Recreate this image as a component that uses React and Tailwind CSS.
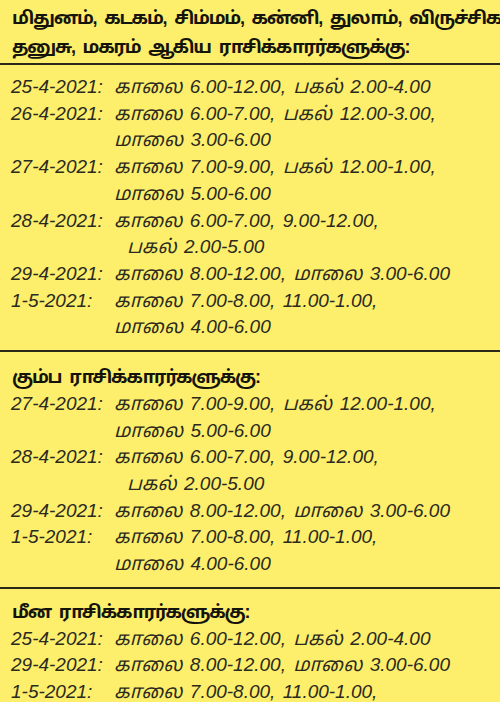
import React from "react";

function Row({ date, time, indent }) {
  return (
    <div className="flex h-[26.7px] items-center whitespace-nowrap">
      <div className="w-[103px] shrink-0">{date}</div>
      <div className={indent ? "pl-[13px]" : ""}>{time}</div>
    </div>
  );
}

function Rule({ className }) {
  return <div className={`h-[2px] bg-[#2a2818] ${className}`}></div>;
}

export default function App() {
  const first = [
    { date: "25-4-2021:", time: "காலை 6.00-12.00, பகல் 2.00-4.00" },
    { date: "26-4-2021:", time: "காலை 6.00-7.00, பகல் 12.00-3.00," },
    { date: "", time: "மாலை 3.00-6.00" },
    { date: "27-4-2021:", time: "காலை 7.00-9.00, பகல் 12.00-1.00," },
    { date: "", time: "மாலை 5.00-6.00" },
    { date: "28-4-2021:", time: "காலை 6.00-7.00, 9.00-12.00," },
    { date: "", time: "பகல் 2.00-5.00", indent: true },
    { date: "29-4-2021:", time: "காலை 8.00-12.00, மாலை 3.00-6.00" },
    { date: "1-5-2021:", time: "காலை 7.00-8.00, 11.00-1.00," },
    { date: "", time: "மாலை 4.00-6.00" },
  ];
  const second = [
    { date: "27-4-2021:", time: "காலை 7.00-9.00, பகல் 12.00-1.00," },
    { date: "", time: "மாலை 5.00-6.00" },
    { date: "28-4-2021:", time: "காலை 6.00-7.00, 9.00-12.00," },
    { date: "", time: "பகல் 2.00-5.00", indent: true },
    { date: "29-4-2021:", time: "காலை 8.00-12.00, மாலை 3.00-6.00" },
    { date: "1-5-2021:", time: "காலை 7.00-8.00, 11.00-1.00," },
    { date: "", time: "மாலை 4.00-6.00" },
  ];
  const third = [
    { date: "25-4-2021:", time: "காலை 6.00-12.00, பகல் 2.00-4.00" },
    { date: "29-4-2021:", time: "காலை 8.00-12.00, மாலை 3.00-6.00" },
    { date: "1-5-2021:", time: "காலை 7.00-8.00, 11.00-1.00," },
  ];

  const rows = "pl-[11px] text-[19px] italic text-[#2b2a20] [word-spacing:2px] font-['Liberation_Sans','Noto_Sans_Tamil','Noto_Sans',sans-serif]";
  const head = "pl-[12px] whitespace-nowrap text-[18px] font-bold text-[#15140c] tracking-[-1.2px] [word-spacing:4px] font-['Liberation_Sans','Noto_Sans_Tamil','Noto_Sans',sans-serif]";

  return (
    <div className="w-[500px] h-[702px] overflow-hidden bg-[#fdef6c]">
      <div className={`${head} pt-[4px] leading-[29px] overflow-hidden`}>
        <div>மிதுனம், கடகம், சிம்மம், கன்னி, துலாம், விருச்சிகம்,</div>
        <div>தனுசு, மகரம் ஆகிய ராசிக்காரர்களுக்கு:</div>
      </div>
      <Rule className="mt-[1px]" />
      <div className={`${rows} pt-[9px]`}>
        {first.map((r, i) => (
          <Row key={i} {...r} />
        ))}
      </div>
      <Rule className="mt-[9px]" />
      <div className={`${head} pt-[12px] leading-[27px]`}>கும்ப ராசிக்காரர்களுக்கு:</div>
      <div className={rows}>
        {second.map((r, i) => (
          <Row key={i} {...r} />
        ))}
      </div>
      <Rule className="mt-[9px]" />
      <div className={`${head} pt-[10px] leading-[27px]`}>மீன ராசிக்காரர்களுக்கு:</div>
      <div className={rows}>
        {third.map((r, i) => (
          <Row key={i} {...r} />
        ))}
      </div>
    </div>
  );
}
